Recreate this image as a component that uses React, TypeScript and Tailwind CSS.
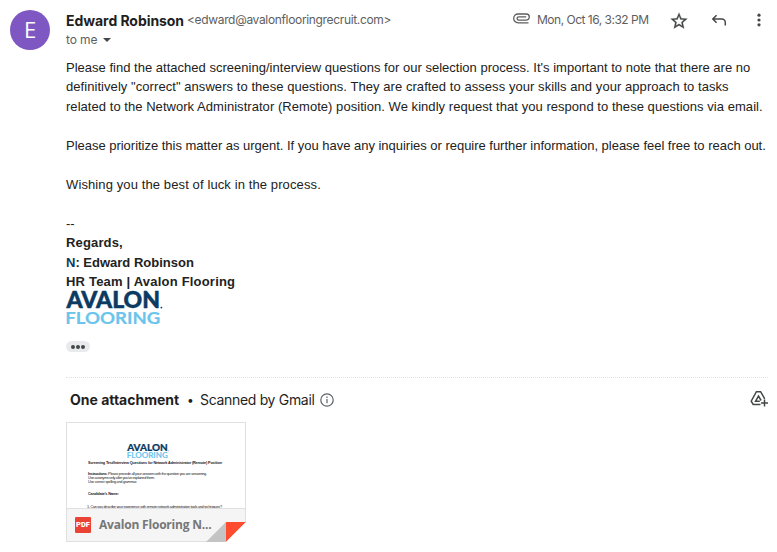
import type { ReactNode } from 'react';

const ui = "font-['Inter','Roboto',sans-serif]";

function Logo({ className }: { className: string }) {
  return (
    <svg viewBox="0 0 97 32" className={className} aria-label="Avalon Flooring">
      <g fontFamily="Lato, sans-serif" strokeLinejoin="miter">
        <text x="0.5" y="16.4" fontSize="22.6" fontWeight="900" fill="#0b3a62" stroke="#0b3a62" strokeWidth="0.5" textLength="93.5" lengthAdjust="spacingAndGlyphs">AVALON</text>
        <text x="-0.8" y="31.8" fontSize="17.8" fontWeight="700" fill="#6ac5ec" stroke="#6ac5ec" strokeWidth="0.2" textLength="95" lengthAdjust="spacingAndGlyphs">FLOORING</text>
      </g>
      <circle cx="95.4" cy="15.6" r="0.9" fill="#0b3a62" />
    </svg>
  );
}

function Line({ children, className = '' }: { children?: ReactNode; className?: string }) {
  return <div className={`h-[19.5px] whitespace-pre ${className}`}>{children}</div>;
}

function Header() {
  return (
    <header className={`flex h-[58px] pl-2.5 ${ui}`}>
      <div className="mt-2.5 flex h-10 w-10 shrink-0 items-center justify-center rounded-full bg-[#7e57c2] pb-px font-['Open_Sans',sans-serif] text-[22px] text-white">E</div>
      <div className="ml-4 mt-2.5 flex-1 whitespace-nowrap">
        <div className="flex h-5 items-center">
          <span className="w-[121px] text-[14px] font-bold tracking-[-0.06px] text-[#1f1f1f]">Edward Robinson</span>
          <span className="text-[12px] tracking-[-0.34px] text-[#5e5e5e]">&lt;edward@avalonflooringrecruit.com&gt;</span>
        </div>
        <div className="flex h-5 items-center text-[12px] tracking-[-0.1px] text-[#5e5e5e]">
          to me
          <svg className="ml-1.5 h-1 w-2" viewBox="0 0 8 4"><path d="M0 0h8L4 4z" fill="#444746" /></svg>
        </div>
      </div>
      <div className="mt-2.5 flex h-5 items-center">
        <svg className="mb-[3px] h-[11px] w-[17px]" viewBox="0 0 17 11" fill="none" stroke="#5e5e5e" strokeWidth="1.3">
          <path d="M15.5 9.8H5.1A4.4 4.4 0 0 1 5.1 1h8.1a3.1 3.1 0 0 1 0 6.2H5.8a1.7 1.7 0 0 1 0-3.4h7.4" />
        </svg>
        <span className="ml-[7px] w-[113px] whitespace-nowrap text-[12px] tracking-[-0.5px] text-[#5e5e5e]">Mon, Oct 16, 3:32 PM</span>
        <svg className="ml-[19px] mt-0.5 h-5 w-5" viewBox="0 0 24 24" fill="#444746" stroke="#444746" strokeWidth="0.3">
          <path d="m22 9.24-7.19-.62L12 2 9.19 8.63 2 9.24l5.46 4.73L5.82 21 12 17.27 18.18 21l-1.63-7.03zM12 15.4l-3.76 2.27 1-4.28-3.32-2.88 4.38-.38L12 6.1l1.71 4.04 4.38.38-3.32 2.88 1 4.28z" />
        </svg>
        <svg className="ml-5 mt-0.5 h-5 w-5" viewBox="0 0 20 20" fill="none" stroke="#444746" strokeWidth="1.5">
          <path d="M7.6 4.2 3.8 8l3.8 3.8M3.8 8h9.1a3.4 3.4 0 0 1 3.4 3.4v3.2" />
        </svg>
        <svg className="ml-5 mr-2 h-5 w-5" viewBox="0 0 20 20" fill="#444746">
          <circle cx="10" cy="5.2" r="1.6" /><circle cx="10" cy="10" r="1.6" /><circle cx="10" cy="14.8" r="1.6" />
        </svg>
      </div>
    </header>
  );
}

function Message() {
  return (
    <main className="ml-[66px] font-['Liberation_Sans',Arial,sans-serif] text-[13px] leading-[19.5px] text-[#222]">
      <div className="h-[19px] whitespace-pre tracking-[0.015px]">Please find the attached screening/interview questions for our selection process. It's important to note that there are no</div>
      <div className="h-5 whitespace-pre tracking-[0.06px]">definitively "correct" answers to these questions. They are crafted to assess your skills and your approach to tasks</div>
      <Line className="tracking-[0.045px]">related to the Network Administrator (Remote) position. We kindly request that you respond to these questions via email.</Line>
      <Line />
      <Line className="tracking-[-0.02px]">Please prioritize this matter as urgent. If you have any inquiries or require further information, please feel free to reach out.</Line>
      <Line />
      <Line className="tracking-[0.11px]">Wishing you the best of luck in the process.</Line>
      <Line />
      <div className="h-[18.5px]">--</div>
      <div className="h-5 font-bold tracking-[0.15px]">Regards,</div>
      <div className="h-[19px] font-bold"><span className="text-[#0b3a62]">N</span>: Edward Robinson</div>
      <Line className="font-bold tracking-[0.2px]">HR Team | Avalon Flooring</Line>
      <Logo className="mt-px block h-8 w-[97px] overflow-visible" />
      <div className="mt-[17px] flex h-[11px] w-6 items-center justify-center gap-px rounded-full bg-[#e8eaed]">
        <i className="h-1 w-1 rounded-full bg-[#444746]" />
        <i className="h-1 w-1 rounded-full bg-[#444746]" />
        <i className="h-1 w-1 rounded-full bg-[#444746]" />
      </div>
    </main>
  );
}

function Preview() {
  return (
    <div className="h-[85px] overflow-hidden bg-white">
      <Logo className="ml-[60px] mt-[21px] block h-[14px] w-[42px] overflow-visible" />
      <svg className="mt-px block h-[49px] w-[178px]" viewBox="0 0 178 49" fontFamily="Liberation Sans, Arial, sans-serif" fontSize="3.8" fill="#222">
        <text x="21" y="4.5" fontWeight="700" textLength="134">Screening Test/Interview Questions for Network Administrator (Remote) Position</text>
        <text x="21" y="16" textLength="119"><tspan fontWeight="700">Instructions:</tspan> Please precede all your answers with the question you are answering.</text>
        <text x="21" y="20" textLength="67">Use acronyms only after you've explained them.</text>
        <text x="21" y="24" textLength="49">Use correct spelling and grammar.</text>
        <text x="21" y="35.5" fontWeight="700" textLength="31">Candidate's Name:</text>
        <text x="20" y="48.5" textLength="135">1. Can you describe your experience with remote network administration tools and techniques?</text>
      </svg>
    </div>
  );
}

function Attachments() {
  return (
    <section className={`ml-[66px] ${ui}`}>
      <div className="mr-[9px] border-t border-dotted border-[#e0e2e5]" />
      <div className="mt-3 flex h-5 items-center whitespace-nowrap pl-1 text-[14px] text-[#1f1f1f]">
        <span className="w-[117px] pb-px font-bold">One attachment</span>
        <span className="w-[13px] text-[12px]">•</span>
        <span className="w-[120px] pb-px tracking-[-0.32px]">Scanned by Gmail</span>
        <svg className="h-[14px] w-[14px]" viewBox="0 0 14 14" fill="none" stroke="#5f6368" strokeWidth="1.2">
          <circle cx="7" cy="7" r="6.2" /><path d="M7 6v4.2M7 3.6V5" />
        </svg>
        <svg className="mb-1 ml-auto mr-[9px] h-[17px] w-[18px]" viewBox="0 0 18 17" fill="none" stroke="#444746" strokeWidth="1.5">
          <path d="M10.5 14.5H3.2L1.2 11.2 6.4 1.7h4.2l4.1 7.1M9.8 11.2H5.6l2.9-5.1 2.6 4.4M14.5 9.5v7M11 13h7" />
        </svg>
      </div>
      <div className="relative mt-3 h-[120px] w-[180px] border border-[#e0e0e0]">
        <Preview />
        <div className="flex h-[33px] items-center border-t border-[#e0e0e0] bg-[#f5f5f5] pl-2">
          <span className="flex h-4 w-4 items-center justify-center rounded-[1px] bg-[#ea4335] font-['Roboto',sans-serif] text-[7.5px] font-black text-white">PDF</span>
          <span className="ml-2 whitespace-nowrap font-['Open_Sans',sans-serif] text-[12px] font-bold tracking-[-0.2px] text-[#777]">Avalon Flooring N...</span>
        </div>
        <svg className="absolute -bottom-px -right-px h-5 w-10" viewBox="0 0 40 20">
          <path d="M0 20 20 0v20z" fill="#c4c4c4" /><path d="M20 0h20L20 20z" fill="#ff4b2e" /><path d="M40 0v20H20z" fill="#fff" />
        </svg>
      </div>
    </section>
  );
}

export default function App() {
  return (
    <div className="h-[552px] w-[777px] overflow-hidden bg-white">
      <Header />
      <Message />
      <div className="h-[25px]" />
      <Attachments />
    </div>
  );
}
